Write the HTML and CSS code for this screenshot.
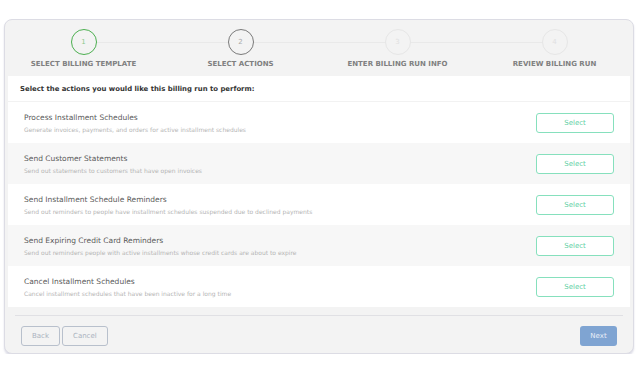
FILE: index.html
```html
<!DOCTYPE html>
<html>
<head>
  <title>New Billing Run</title>
  <link rel="stylesheet" href="styles.css">
</head>
<body>
  <div class="wizard">
    <div class="steps">
      <div class="step done">
        <div class="circle">1</div>
        <div class="label">Select Billing Template</div>
      </div>
      <div class="step current">
        <div class="circle">2</div>
        <div class="label">Select Actions</div>
      </div>
      <div class="step">
        <div class="circle">3</div>
        <div class="label">Enter Billing Run Info</div>
      </div>
      <div class="step">
        <div class="circle">4</div>
        <div class="label">Review Billing Run</div>
      </div>
    </div>

    <div class="panel">
      <div class="panel-head">Select the actions you would like this billing run to perform:</div>
      <div class="action">
        <div class="info">
          <div class="title">Process Installment Schedules</div>
          <div class="desc">Generate invoices, payments, and orders for active installment schedules</div>
        </div>
        <button class="select-btn">Select</button>
      </div>
      <div class="action">
        <div class="info">
          <div class="title">Send Customer Statements</div>
          <div class="desc">Send out statements to customers that have open invoices</div>
        </div>
        <button class="select-btn">Select</button>
      </div>
      <div class="action">
        <div class="info">
          <div class="title">Send Installment Schedule Reminders</div>
          <div class="desc">Send out reminders to people have installment schedules suspended due to declined payments</div>
        </div>
        <button class="select-btn">Select</button>
      </div>
      <div class="action">
        <div class="info">
          <div class="title">Send Expiring Credit Card Reminders</div>
          <div class="desc">Send out reminders people with active installments whose credit cards are about to expire</div>
        </div>
        <button class="select-btn">Select</button>
      </div>
      <div class="action">
        <div class="info">
          <div class="title">Cancel Installment Schedules</div>
          <div class="desc">Cancel installment schedules that have been inactive for a long time</div>
        </div>
        <button class="select-btn">Select</button>
      </div>
    </div>

    <div class="footer">
      <div class="left-btns">
        <button class="ghost-btn">Back</button>
        <button class="ghost-btn">Cancel</button>
      </div>
      <button class="next-btn">Next</button>
    </div>
  </div>
</body>
</html>
```
FILE: styles.css
```css
body {
  margin: 0;
  font-family: 'DejaVu Sans', sans-serif;
  background: #fff;
  color: #555;
}

.wizard {
  margin: 19px 0 0 4px;
  width: 630px;
  height: 335px;
  box-sizing: border-box;
  background: #f3f3f3;
  border: 1px solid #dcdce4;
  border-radius: 8px;
  box-shadow: 0 2px 2px rgba(160,160,190,0.35);
}

.steps {
  display: grid;
  grid-template-columns: repeat(4, 1fr);
  padding-top: 9px;
  height: 47px;
  position: relative;
}

.steps::before {
  content: "";
  position: absolute;
  left: 80px;
  right: 80px;
  top: 22px;
  border-top: 1px solid #e9e9e9;
}

.step {
  display: flex;
  flex-direction: column;
  align-items: center;
  position: relative;
}

.circle {
  width: 26px;
  height: 26px;
  box-sizing: border-box;
  border-radius: 50%;
  border: 1px solid #e6e6e6;
  background: #f3f3f3;
  color: #e0e0e0;
  font-size: 7px;
  display: flex;
  align-items: center;
  justify-content: center;
}

.step.done .circle {
  border: 1.5px solid #4caf50;
  color: #8cc98e;
}

.step.current .circle {
  border: 1.5px solid #7a7a7a;
  color: #aaa;
}

.label {
  margin-top: 5px;
  font-size: 7px;
  font-weight: bold;
  text-transform: uppercase;
  color: #808080;
}

.panel {
  margin: 0 3px;
  background: #fff;
}

.panel-head {
  font-size: 6.9px;
  font-weight: bold;
  color: #333;
  height: 26px;
  box-sizing: border-box;
  padding: 9px 12px 0;
  border-bottom: 1px solid #f2f2f2;
}

.action {
  display: flex;
  align-items: center;
  justify-content: space-between;
  height: 41px;
  padding: 0 16px;
}

.action:nth-child(odd) {
  background: #f7f7f7;
}

.title {
  font-size: 7.5px;
  color: #5a5a5a;
}

.desc {
  margin-top: 4px;
  font-size: 6px;
  color: #b5b5b5;
}

.select-btn {
  width: 78px;
  height: 20px;
  background: #fff;
  border: 1.5px solid #86e0bd;
  border-radius: 3px;
  color: #5fd0a5;
  font-family: inherit;
  font-size: 7px;
}

.footer {
  margin: 8px 10px 0;
  border-top: 1px solid #e0e0e4;
  display: flex;
  justify-content: space-between;
  padding: 10px 6px 0 6px;
}

.left-btns {
  display: flex;
  gap: 2px;
}

.ghost-btn {
  height: 20px;
  padding: 0 10px;
  background: transparent;
  border: 1px solid #b8c0cc;
  border-radius: 3px;
  color: #aab2be;
  font-family: inherit;
  font-size: 7px;
}

.next-btn {
  height: 20px;
  width: 37px;
  background: #7fa4d2;
  border: none;
  border-radius: 3px;
  color: #e8eef8;
  font-family: inherit;
  font-size: 7px;
}
```
